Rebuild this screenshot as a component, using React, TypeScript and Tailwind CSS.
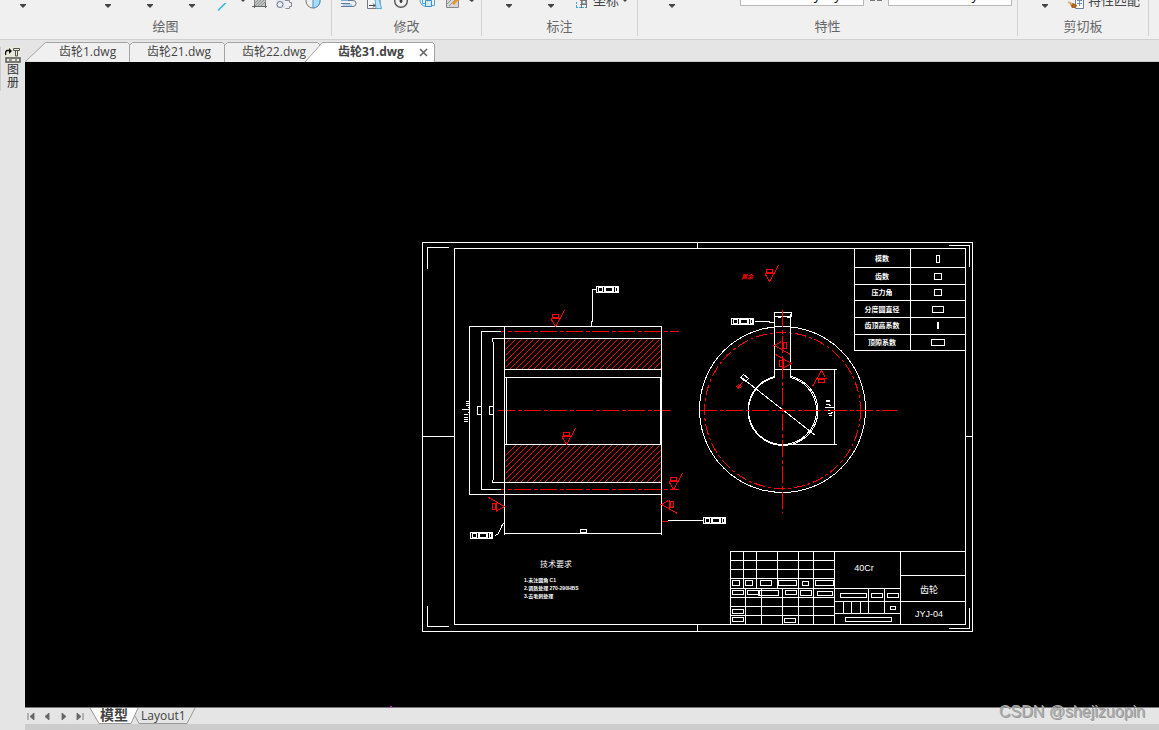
import { useState } from "react";
import clsx from "clsx";

const uiFont = "font-['Open_Sans','Noto_Sans_CJK_SC',sans-serif]";

const Caret = () => (
  <svg width="6" height="4" viewBox="0 0 6 4" className="mb-[-1px] fill-[#444]">
    <path d="M0 0H6V1L3 4L0 1Z" />
  </svg>
);

const DropButton: React.FC<{ label: string; className?: string }> = ({
  label,
  className,
}) => (
  <button
    aria-label={label}
    className={clsx("flex h-[7px] items-end justify-center", className)}
  >
    <Caret />
  </button>
);

const RibbonGroup: React.FC<{
  title: string;
  className?: string;
  children: React.ReactNode;
}> = ({ title, className, children }) => (
  <section
    className={clsx(
      "flex h-9 shrink-0 flex-col border-r border-[#d2d2d2]",
      className,
    )}
  >
    <div className="flex h-4 items-start overflow-hidden">{children}</div>
    <h2 className="text-center text-[13px] leading-5 text-[#666]">{title}</h2>
  </section>
);

const Ribbon = () => (
  <header className="flex h-10 shrink-0 overflow-hidden border-b border-[#d0d0d0] bg-[#f0f0f0]">
    <RibbonGroup title="绘图" className="w-[332px]">
      <DropButton label="直线" className="w-[46px]" />
      <DropButton label="多段线" className="ml-10 w-11" />
      <DropButton label="圆" className="w-10" />
      <DropButton label="圆弧" className="w-11" />
      <button aria-label="射线" className="ml-px h-4 w-5">
        <svg width="20" height="10" className="stroke-[#2fb4e4]">
          <path d="M3 7.5L12 -1.5" strokeWidth="1.5" />
        </svg>
      </button>
      <button aria-label="射线选项" className="flex w-4 justify-center">
        <svg width="4" height="2" className="fill-[#444]">
          <path d="M0 0H4L2 2Z" />
        </svg>
      </button>
      <button aria-label="填充" className="flex h-4 w-5">
        <svg width="20" height="10" fill="none">
          <rect x="3.5" y="-5.5" width="11" height="12" fill="#c3c6c6" stroke="#888" />
          <path d="M4 3L11 -4M4 6L13 -3M7 6L14 -1M10 6L14 2" stroke="#8a9090" />
          <path d="M1 6.5H16M14.5 3V8M3.5 4V8" stroke="#666" />
        </svg>
      </button>
      <button aria-label="修订云线" className="ml-1 flex h-4 w-5">
        <svg width="20" height="10" fill="none">
          <path d="M1 0H10V8H1Z" fill="#dfe5f3" />
          <circle cx="5" cy="4.5" r="3" fill="#eef" stroke="#6f7480" />
          <path d="M10 0.5H14.5V2.5H16.5V6.5H14.5V8.5H10.5" stroke="#858b99" />
        </svg>
      </button>
      <button aria-label="面域" className="ml-1 flex h-4 w-6">
        <svg width="24" height="10" fill="none">
          <circle cx="14" cy="1" r="7" fill="#eee" stroke="#777" />
          <path d="M14 -6V8A7 7 0 0 0 21 1V-6Z" fill="#a9daf6" stroke="#4b93c8" />
        </svg>
      </button>
    </RibbonGroup>

    <RibbonGroup title="修改" className="w-[150px]">
      <button aria-label="偏移" className="ml-2 flex h-4 w-[26px]">
        <svg width="22" height="10" fill="none">
          <path d="M1 3.5H10M1 6.5H13A3 3 0 0 0 13 0.5H5" stroke="#667a90" />
          <path d="M1 0.5H8M3 5H12" stroke="#6fb2e6" />
        </svg>
      </button>
      <button aria-label="缩放" className="flex h-4 w-[26px]">
        <svg width="22" height="10" fill="none">
          <path d="M1.5 -1V8.5H14V-1" fill="#f7f7f7" stroke="#777" />
          <path d="M9 -1H13L15.5 8.5H10Z" fill="#b9e3f8" stroke="#58a6d6" />
          <path d="M3 5.5H9M7 3.5L9 5.5L7 7.5" stroke="#444" />
        </svg>
      </button>
      <button aria-label="旋转" className="flex h-4 w-[26px]">
        <svg width="22" height="10" fill="none">
          <circle cx="9" cy="1" r="6.3" stroke="#555" strokeWidth="1.4" />
          <path d="M9 -1V3M7.5 1H10.5" stroke="#333" strokeWidth="1.6" />
        </svg>
      </button>
      <button aria-label="复制" className="flex h-4 w-[26px]">
        <svg width="22" height="10" fill="none">
          <path d="M2 0A7 7 0 0 0 8 6.5M4.5 0V3.5H7M16.5 0V5.5H14" stroke="#4aa3dc" />
          <path d="M7.5 0.5H13.5V6.5H7.5Z" fill="#cceafa" stroke="#3990c9" />
        </svg>
      </button>
      <button aria-label="编辑填充" className="flex h-4 w-5">
        <svg width="20" height="10" fill="none">
          <path d="M2.5 -2V7.5H14.5V-2" fill="#d5d5d5" stroke="#888" />
          <path d="M3 4L8 -1M5 6L12 -1" stroke="#999" />
          <path d="M9 4L15 -2" stroke="#e69a22" strokeWidth="2.5" />
        </svg>
      </button>
      <button aria-label="更多修改" className="flex w-2.5 justify-end">
        <svg width="5" height="2" className="fill-[#444]">
          <path d="M0 0H5L3 2Z" />
        </svg>
      </button>
    </RibbonGroup>

    <RibbonGroup title="标注" className="w-[156px]">
      <DropButton label="线性标注" className="ml-[5px] w-11" />
      <DropButton label="引线" className="w-10" />
      <button className="ml-1 flex h-4 items-start gap-0.5 text-[13px] leading-[13px] text-[#444]">
        <svg width="16" height="10" fill="none">
          <path d="M1.5 2V8M1 7.5H13" stroke="#3fa4dd" strokeDasharray="2 1" />
          <path d="M5 0.5H12M6.5 -1V8M11.5 -1V8M5 4.5H11" stroke="#777" />
          <circle cx="9" cy="2" r="2" stroke="#777" />
        </svg>
        <span className="-mt-1.5">坐标</span>
        <svg width="4" height="2" className="ml-0.5 fill-[#444]">
          <path d="M0 0H4L2 2Z" />
        </svg>
      </button>
    </RibbonGroup>

    <RibbonGroup title="特性" className="w-[380px]">
      <DropButton label="图层" className="ml-3 w-11" />
      <select
        aria-label="颜色"
        className="-mt-4 ml-[46px] h-[22px] w-[124px] appearance-none border border-[#b8b8b8] bg-white pl-12 text-[13px] leading-5 text-black"
      >
        <option>— ByLayer</option>
      </select>
      <svg width="24" height="3" className="fill-[#777]">
        <path d="M6 0H11V1H6ZM13 0H18V1H13Z" />
      </svg>
      <select
        aria-label="线型"
        className="-mt-4 h-[22px] w-[124px] appearance-none border border-[#b8b8b8] bg-white pl-[74px] text-[13px] leading-5 text-black"
      >
        <option>By</option>
      </select>
    </RibbonGroup>

    <RibbonGroup title="剪切板" className="w-[131px]">
      <DropButton label="粘贴" className="ml-[5px] w-11" />
      <button className="flex h-4 items-start text-[13px] leading-[13px] text-[#444]">
        <svg width="21" height="10" fill="none">
          <path d="M8.5 -2V8.5H16.5V-2" fill="#fff" stroke="#6f7d99" />
          <path d="M10 0.5H15M10 3.5H15M12.5 -1V6" stroke="#6f8fc6" />
          <path d="M3 4L6 3L10 5L9 8H5Z" fill="#b0621f" />
          <path d="M1 2L5 4" stroke="#e5b378" strokeWidth="2" />
        </svg>
        <span className="-mt-1.5">特性匹配</span>
      </button>
    </RibbonGroup>
  </header>
);

const files = [
  {
    name: "齿轮1.dwg",
    width: "w-[105px] pl-[34px]",
    shape: "M0 21L20 2H102L104 4V22",
  },
  {
    name: "齿轮21.dwg",
    width: "w-[95px] pl-[17px]",
    shape: "M-1 22V5L2 2H92L94 4V22",
  },
  {
    name: "齿轮22.dwg",
    width: "w-[95px] pl-[17px]",
    shape: "M-1 22V5L2 2H92L94 4V22",
  },
  {
    name: "齿轮31.dwg",
    width: "-ml-[16px] w-[131px] pl-[34px]",
    shape: "M0 22L18 2H128L130 4V22",
  },
];

const FileTabs = () => {
  const [active, setActive] = useState(3);
  return (
    <nav className="flex h-[22px] shrink-0 border-b border-[#c6cbc8]">
      {files.map((file, idx) => (
        <div key={file.name} className={clsx("relative flex h-[22px]", file.width)}>
          <svg
            className="absolute inset-0 h-full w-full"
            fill={active === idx ? "#fff" : "#f0f0f0"}
            stroke="#a3a3a3"
          >
            <path d={file.shape} transform="translate(.5 .5)" />
          </svg>
          <button
            onClick={() => setActive(idx)}
            className={clsx(
              "relative text-[12px] leading-6 whitespace-nowrap text-[#444]",
              active === idx && "font-bold",
            )}
          >
            {file.name}
          </button>
          {active === idx && (
            <button
              aria-label="关闭"
              className="relative ml-auto flex w-4 items-center pt-0.5"
            >
              <svg width="9" height="9" className="stroke-[#666]">
                <path d="M1 1L8 8M8 1L1 8" strokeWidth="1.6" />
              </svg>
            </button>
          )}
        </div>
      ))}
    </nav>
  );
};

// surface finish mark, origin at the tip of the triangle
const Finish: React.FC<{ x: number; y: number; turn?: number }> = ({
  x,
  y,
  turn = 0,
}) => (
  <g transform={`translate(${x} ${y}) rotate(${turn})`} stroke="#f00">
    <path d="M-5 -8H4M-4 -7L0 0L9 -16" />
    <rect x="-3" y="-12" width="6" height="3" />
  </g>
);

// tolerance frame, filled cells on whole pixels
const Tolerance: React.FC<{ x: number; y: number }> = ({ x, y }) => (
  <g transform={`translate(${x - 0.5} ${y - 0.5})`} stroke="none">
    <rect width="23" height="7" fill="#fff" />
    <path
      d="M1 1H2V6H1ZM7 1H8V6H7ZM18 1H19V6H18ZM3 2H6V5H3ZM10 2H16V5H10ZM20 2H21V5H20Z"
      fill="#000"
    />
  </g>
);

const params = [
  { name: "模数", y: 258, box: [936, 255, 3, 7] },
  { name: "齿数", y: 276, box: [934, 273, 7, 6] },
  { name: "压力角", y: 292, box: [934, 289, 7, 6] },
  { name: "分度圆直径", y: 309, box: [932, 306, 11, 6] },
  { name: "齿顶高系数", y: 325, box: [937, 322, 1, 6] },
  { name: "顶隙系数", y: 342, box: [931, 339, 13, 6] },
];

const titleBoxes = [
  [732, 580, 7, 5],
  [745, 580, 7, 5],
  [760, 580, 11, 5],
  [778, 580, 18, 5],
  [802, 581, 6, 4],
  [815, 580, 18, 5],
  [732, 590, 11, 4],
  [747, 590, 12, 4],
  [758, 590, 20, 5],
  [785, 590, 11, 4],
  [800, 590, 11, 5],
  [817, 591, 15, 4],
  [732, 609, 11, 4],
  [732, 617, 11, 4],
  [784, 618, 11, 4],
  [840, 593, 26, 4],
  [871, 593, 11, 4],
  [887, 593, 11, 4],
  [890, 606, 5, 3],
  [845, 617, 46, 4],
];

const hatchLines = Array.from({ length: 34 }, (_, i) => 504 + i * 6);

const Drawing = () => (
  <svg
    viewBox="25 62 1134 645"
    className="h-full w-full font-['Liberation_Sans_Narrow','Liberation_Sans','Noto_Sans_CJK_SC',sans-serif]"
    role="img"
    aria-label="齿轮零件图"
  >
    <defs>
      <clipPath id="cut-top">
        <rect x="505" y="339" width="156" height="30" />
      </clipPath>
      <clipPath id="cut-bottom">
        <rect x="505" y="445" width="156" height="37" />
      </clipPath>
    </defs>
    <g
      transform="translate(.5 .5)"
      fill="none"
      stroke="#fff"
      shapeRendering="crispEdges"
    >
      {/* sheet frame */}
      <rect x="422" y="242" width="550" height="389" />
      <rect x="454" y="248" width="511" height="376" />
      <path d="M697 242V248M697 624V631M422 436H454M965 436H972" />
      <path d="M448 247H427V268M427 605V626H448M948 245H969V266M969 607V628H948" />

      {/* section view */}
      <g stroke="#f00" clipPath="url(#cut-top)">
        {hatchLines.map((x) => (
          <path key={x} d={`M${x - 25} 369L${x + 5} 339`} />
        ))}
      </g>
      <g stroke="#f00" clipPath="url(#cut-bottom)">
        {hatchLines.map((x) => (
          <path key={x} d={`M${x - 26} 482L${x + 11} 445`} />
        ))}
      </g>
      <g stroke="#f00" strokeDasharray="17 3 4 2">
        <path d="M500 331H678M500 489H678" strokeDashoffset="13" />
        <path d="M497 410H671" />
      </g>
      <path d="M504 326V534M661 326V534M506 377V444M660 377V444" />
      <path d="M468 326H661M491 338H661M504 369H661M504 377H661M504 444H661M491 482H661M468 494H661M504 533H661" />
      <path d="M469 326V494M481 331V489M493 341V479M492 338V341M492 479V482M480 331H500M480 489H500" />
      <path d="M477 406H481V414H477ZM489 406H493V414H489ZM580 529H586V532H580Z" />
      <path d="M465 401H469M465 403H469M465 405H469M467 407H469M461 409H469M467 412H469M463 414H467M463 417H467M463 419H467M463 421H467" />
      <path d="M596 289H592V321H591V326M504 522L502 524L498 533L495 535M667 520H702M754 321H769V322H774" />
      <path d="M661 521H667" stroke="#f00" />
      <Tolerance x={596} y={286} />
      <Tolerance x={470} y={532} />
      <Tolerance x={703} y={517} />
      <Tolerance x={731} y={318} />
      <Finish x={555} y={326} />
      <Finish x={566} y={444} />
      <Finish x={673} y={489} />
      <Finish x={504} y={506} turn={-90} />
      <Finish x={661} y={504} turn={90} />
      <Finish x={769} y={281} />

      {/* end view */}
      <circle cx="782" cy="409" r="83" />
      <circle cx="782" cy="410" r="78" stroke="#f00" strokeDasharray="11 3 3 3" />
      <path d="M774 313V377A34 34 0 1 0 790 377V313" />
      <path d="M774 376A35 35 0 1 0 791 376" />
      <path d="M774 312H791V316H774ZM777 317H780M786 317H789M774 369H836M834 369V444M782 444H836" />
      <path d="M741 377L815 435M743 374L748 378L745 381L740 377Z" />
      <path d="M825 400H829M825 401H829M825 404H829M828 405H830M824 407H834M826 410H829M830 412H832M828 415H831M827 413H831" />
      <g stroke="#f00" strokeDasharray="17 3 4 2">
        <path d="M699 410H896M782 309V512" />
      </g>
      <path d="M736 386L738 384L741 386L738 388ZM737 388L742 382" stroke="#f00" />
      <Finish x={774} y={345} turn={90} />
      <Finish x={791} y={363} turn={-90} />
      <Finish x={821} y={370} turn={180} />

      {/* gear parameters */}
      <path d="M854 248V350H965M910 248V350M854 267H965M854 284H965M854 300H965M854 317H965M854 334H965" />
      {params.map(({ name, box: [x, y, w, h] }) => (
        <rect key={name} x={x} y={y} width={w} height={h} />
      ))}

      {/* title block */}
      <path d="M730 624V551H965M834 551V624M900 551V624M900 575H965M834 588H900M834 601H965M834 613H900" />
      <path d="M730 560H834M730 569H834M730 578H834M730 588H834M730 597H834M730 606H834M730 615H834" />
      <path d="M743 551V588M756 551V588M777 551V588M745 588V624M761 588V624M782 588V624M798 551V624M813 551V624" />
      <path d="M868 588V613M884 588V613M843 601V613M851 601V613M860 601V613" />
      {titleBoxes.map(([x, y, w, h]) => (
        <rect key={`${x}-${y}`} x={x} y={y} width={w} height={h} />
      ))}
      <path d="M389 706H391" stroke="#f0f" />
    </g>

    <g fill="#fff" fontSize="7" fontWeight="bold" textAnchor="middle">
      {params.map(({ name, y }) => (
        <text key={name} x="882" y={y + 3}>
          {name}
        </text>
      ))}
    </g>
    <g fill="#fff" fontSize="9" textAnchor="middle">
      <text x="864" y="571">
        40Cr
      </text>
      <text x="929" y="593">
        齿轮
      </text>
      <text x="929" y="617">
        JYJ-04
      </text>
    </g>
    <g fill="#fff">
      <text x="540" y="567" fontSize="8">
        技术要求
      </text>
      <g fontSize="5" fontWeight="bold">
        <text x="524" y="582">
          1.未注圆角 C1
        </text>
        <text x="524" y="590">
          2.调质处理 270-290HBS
        </text>
        <text x="524" y="598">
          3.去毛刺处理
        </text>
      </g>
    </g>
    <text
      x="741"
      y="279"
      fontSize="6"
      fontStyle="italic"
      fontWeight="bold"
      fill="#f00"
    >
      其余
    </text>
  </svg>
);

const navArrows = [
  { label: "第一个布局", d: "M2 1V8M8 1V8L4 4.5Z" },
  { label: "上一个布局", d: "M7 1V8L3 4.5Z" },
  { label: "下一个布局", d: "M4 1V8L8 4.5Z" },
  { label: "最后一个布局", d: "M3 1V8L7 4.5ZM9 1V8" },
];

const LayoutBar = () => (
  <footer className="shrink-0 border-b-[6px] border-[#ccc]">
    <div className="flex h-[17px] border-t border-[#777]">
      <div className="flex items-center">
        {navArrows.map((arrow) => (
          <button key={arrow.label} aria-label={arrow.label} className="w-4">
            <svg width="10" height="9" className="ml-px fill-[#666]">
              <path d={arrow.d} className="stroke-[#666]" strokeWidth=".8" />
            </svg>
          </button>
        ))}
      </div>
      <div className="relative z-10 ml-px h-4 w-12">
        <svg className="absolute inset-0 h-4 w-12 overflow-visible">
          <path d="M0 0L9 15.5H41L48 0Z" fill="#fff" />
          <path d="M0 0L9 15.5H41L48 0" fill="none" stroke="#999" />
        </svg>
        <button className="relative block w-full text-center text-[14px] leading-[13px] font-bold text-[#444]">
          模型
        </button>
      </div>
      <div className="relative h-4 w-[58px]">
        <svg className="absolute inset-0 h-4 w-full overflow-visible">
          <path d="M-3 8L1 15.5H49L57 0" fill="none" stroke="#999" />
        </svg>
        <button className="relative block pl-[3px] text-[12px] leading-[15px] text-[#444]">
          Layout1
        </button>
      </div>
    </div>
  </footer>
);

const SidePanel = () => (
  <aside className="w-[25px] shrink-0 pt-[7px]">
    <button className="flex h-11 w-full flex-col items-center border-l border-[#ccc] text-[12px] leading-[13px] text-[#333]">
      <svg width="16" height="16" fill="none" className="shrink-0">
        <path d="M0 0H16V16H0Z" fill="#e9ead8" />
        <path d="M4 1L7 4L4 7Z" fill="#111" />
        <path d="M0.5 8V5L2 3.5H5" stroke="#111" strokeWidth="1.5" />
        <path d="M8.5 1.5H14.5V3.5H8.5ZM10.5 3.5H12.5V9H10.5Z" stroke="#555" />
        <path d="M1 11H15V15H1Z" stroke="#555" strokeWidth="1.5" />
        <path d="M4 13H7M10 13H12" stroke="#444" />
      </svg>
      <span className="block w-3">图册</span>
    </button>
  </aside>
);

export default function App() {
  return (
    <div
      className={clsx(
        "relative flex h-screen flex-col overflow-hidden bg-[#e5e5e5]",
        uiFont,
      )}
    >
      <Ribbon />
      <div className="flex min-h-0 flex-1">
        <SidePanel />
        <div className="flex min-w-0 flex-1 flex-col">
          <FileTabs />
          <main className="min-h-0 flex-1 bg-black">
            <Drawing />
          </main>
          <LayoutBar />
        </div>
      </div>
      <p className="absolute right-3.5 bottom-1.5 font-['Liberation_Sans',sans-serif] text-[16px] leading-6 text-[#aaa] [text-shadow:1px_1px_0_#999]">
        CSDN @shejizuopin
      </p>
    </div>
  );
}
